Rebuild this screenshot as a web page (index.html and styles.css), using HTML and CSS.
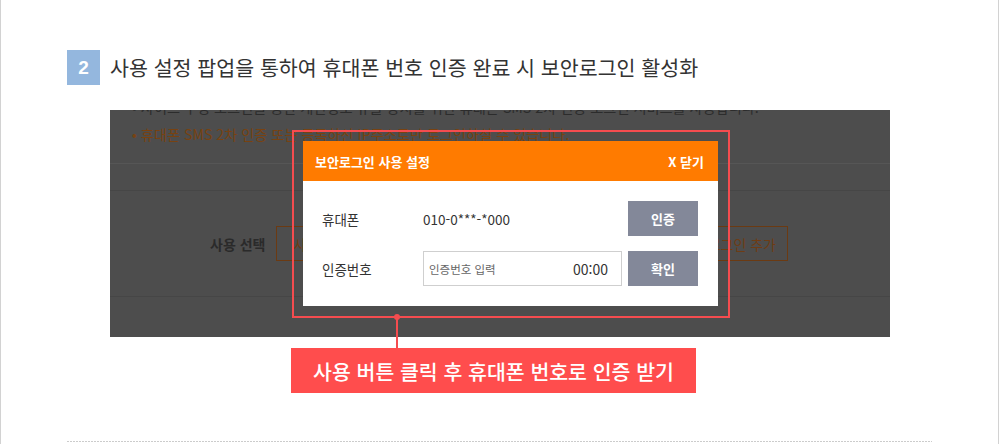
FILE: index.html
```html
<!DOCTYPE html>
<html lang="ko">
<head>
<meta charset="utf-8">
<title>보안로그인 사용 설정</title>
<link rel="stylesheet" href="styles.css">
</head>
<body>
<div class="frame">
  <div class="section">
    <h2 class="step-title"><span class="badge">2</span><span class="title-text">사용 설정 팝업을 통하여 휴대폰 번호 인증 완료 시 보안로그인 활성화</span></h2>

    <div class="shot">
      <ul class="notice">
        <li class="notice-item">사이트 부정 로그인을 통한 개인정보 유출 방지를 위한 휴대폰 SMS 2차 인증 로그인 서비스를 사용합니다.</li>
        <li class="notice-item notice-strong">휴대폰 SMS 2차 인증 또는 등록하신 IP주소로만 로그인하실 수 있습니다.</li>
      </ul>
      <div class="blank-row"></div>
      <div class="select-row">
        <span class="select-label">사용 선택</span>
        <span class="line-btn">사용</span>
        <span class="line-btn">사용안함</span>
        <span class="line-btn line-btn-last">보안로그인 추가</span>
      </div>

      <div class="highlight">
        <div class="popup">
          <div class="popup-head">
            <span class="popup-title">보안로그인 사용 설정</span>
            <span class="popup-close">X 닫기</span>
          </div>
          <div class="popup-body">
            <div class="form-row">
              <span class="form-label">휴대폰</span>
              <span class="form-value">010-0***-*000</span>
              <span class="gray-btn">인증</span>
            </div>
            <div class="form-row">
              <span class="form-label">인증번호</span>
              <span class="code-input"><span class="placeholder">인증번호 입력</span><span class="timer">00:00</span></span>
              <span class="gray-btn">확인</span>
            </div>
          </div>
        </div>
      </div>
    </div>

    <div class="callout">사용 버튼 클릭 후 휴대폰 번호로 인증 받기</div>
  </div>
  <div class="divider"></div>
</div>
</body>
</html>
```

FILE: styles.css
```css
html, body {
  margin: 0;
  padding: 0;
  background: #ffffff;
}

body {
  font-family: "Noto Sans CJK KR", "Noto Sans", sans-serif;
  color: #333333;
}

.frame {
  width: 999px;
  height: 444px;
  box-sizing: border-box;
  border-left: 1px solid #d2d2d2;
  border-right: 1px solid #d2d2d2;
  overflow: hidden;
}

.section {
  padding: 50px 0 0 66px;
}

.step-title {
  display: flex;
  align-items: center;
  margin: 0;
  height: 35px;
  font-weight: normal;
}

.badge {
  width: 33px;
  height: 35px;
  background: #94b7de;
  color: #ffffff;
  font-family: "Liberation Sans", "Noto Sans", sans-serif;
  font-weight: bold;
  font-size: 19px;
  display: flex;
  align-items: center;
  justify-content: center;
}

.title-text {
  margin-left: 10px;
  font-size: 20.6px;
  font-weight: normal;
  color: #333333;
  line-height: 35px;
}

/* dimmed screenshot of the page behind the popup */
.shot {
  position: relative;
  margin: 25px 0 0 43px;
  width: 780px;
  height: 227px;
  background: #4d4d4d;
  overflow: hidden;
}

.notice {
  list-style: none;
  margin: -16px 0 0 0;
  padding: 0 0 15px 22px;
  border-bottom: 1px solid #565656;
  font-size: 14.2px;
  line-height: 27px;
  color: #2c2c2c;
}

.notice-item::before {
  content: "•";
  margin-right: 4px;
}

.notice-strong {
  color: #784211;
}

.blank-row {
  height: 26px;
  border-bottom: 1px solid #464646;
}

.select-row {
  height: 106px;
  box-sizing: border-box;
  border-bottom: 1px solid #464646;
  display: flex;
  align-items: center;
  padding: 0 102px 0 100px;
}

.select-label {
  font-size: 14px;
  font-weight: bold;
  color: #2a2a2a;
  margin-right: 11px;
}

.line-btn {
  height: 35px;
  box-sizing: border-box;
  border: 1px solid #6b3a12;
  color: #6e3c14;
  font-size: 14px;
  padding: 0 16px;
  display: flex;
  align-items: center;
  margin-right: 8px;
}

.line-btn-last {
  margin-left: auto;
  margin-right: 0;
  padding: 0 11px 0 16px;
}

/* red highlight frame around the popup */
.highlight {
  position: absolute;
  left: 182px;
  top: 20px;
  padding: 9px 10px 10px 9px;
  border: 2px solid #f54c4f;
}

.popup {
  width: 415px;
  height: 165px;
  background: #ffffff;
}

.popup-head {
  height: 40px;
  background: #ff7b00;
  color: #ffffff;
  font-size: 13px;
  font-weight: bold;
  display: flex;
  align-items: center;
  justify-content: space-between;
  padding: 0 14px 0 12px;
}

.popup-body {
  padding: 20px 20px 0 19px;
  display: flex;
  flex-direction: column;
  gap: 15px;
}

.form-row {
  display: flex;
  align-items: center;
  height: 35px;
}

.form-label {
  width: 101px;
  font-size: 13.5px;
  color: #333333;
}

.form-value {
  flex: 1;
  font-size: 13.5px;
  color: #333333;
}

.code-input {
  width: 199px;
  height: 35px;
  box-sizing: border-box;
  border: 1px solid #cfcfcf;
  display: flex;
  align-items: center;
  justify-content: space-between;
  padding: 0 13px 0 5px;
  margin-right: 6px;
}

.placeholder {
  font-size: 11.5px;
  color: #666666;
}

.timer {
  font-size: 14px;
  color: #333333;
}

.gray-btn {
  width: 70px;
  height: 35px;
  background: #838899;
  color: #ffffff;
  font-size: 13px;
  font-weight: bold;
  display: flex;
  align-items: center;
  justify-content: center;
}

/* callout caption with connector to the highlight */
.callout {
  position: relative;
  margin: 11px 0 0 224px;
  width: 405px;
  height: 45px;
  background: #ff4d4d;
  color: #ffffff;
  font-size: 20.5px;
  font-weight: 500;
  display: flex;
  align-items: center;
  justify-content: center;
}

.callout::before {
  content: "";
  position: absolute;
  left: 105px;
  top: -31px;
  width: 2px;
  height: 31px;
  background: #f54c4f;
}

.callout::after {
  content: "";
  position: absolute;
  left: 103px;
  top: -34px;
  width: 6px;
  height: 6px;
  border-radius: 50%;
  background: #f54c4f;
}

.divider {
  margin: 48px 0 0 66px;
  width: 865px;
  height: 1px;
  background-image: repeating-linear-gradient(to right, #cccccc 0 2px, transparent 2px 3px);
}
```
